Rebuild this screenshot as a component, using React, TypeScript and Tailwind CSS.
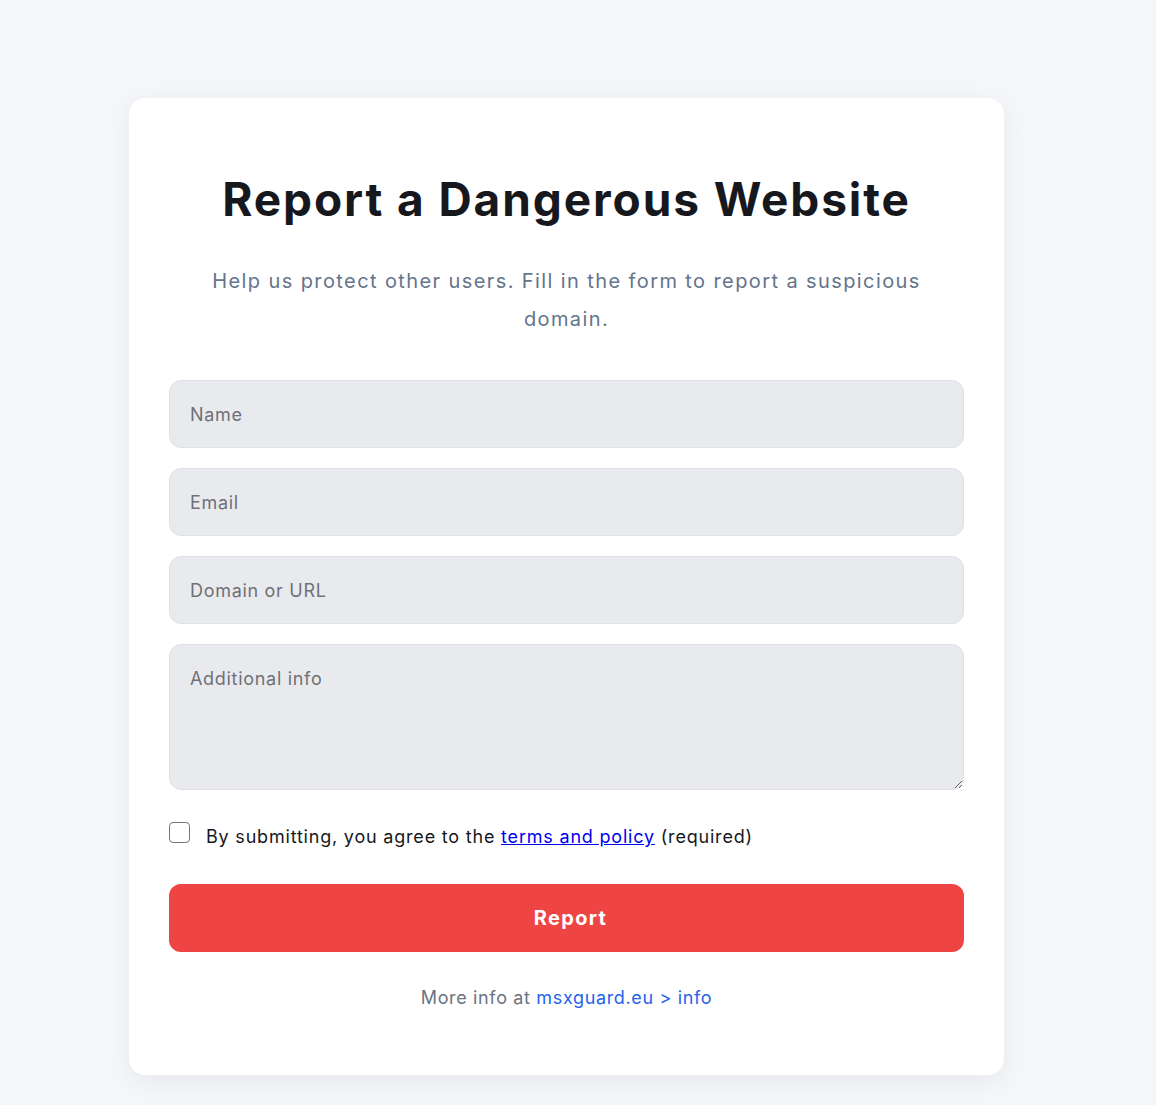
import { useState } from 'react';

export default function App() {
  const [agreed, setAgreed] = useState(false);

  return (
    <div className="min-h-screen w-full bg-[#f5f6fa] flex items-start justify-center pt-[98px] pb-10 pr-[23px]" style={{ fontFamily: 'Inter, "Noto Sans", sans-serif' }}>
      <div className="w-[875px] bg-white rounded-2xl shadow-[0_6px_24px_rgba(15,23,42,0.06)] px-10 pt-[72px] pb-[63px]">
        {/* Header */}
        <h1 className="text-center text-[46px] leading-[58px] font-bold tracking-[1.9px] text-[#16181d]">
          Report a Dangerous Website
        </h1>
        <p className="mx-auto mt-[34px] max-w-[730px] text-center text-[20px] leading-[38px] tracking-[1.4px] text-[#64748b]">
          Help us protect other users. Fill in the form to report a suspicious domain.
        </p>

        {/* Form */}
        <form className="mt-[42px] flex flex-col" onSubmit={(e) => e.preventDefault()}>
          <div className="flex flex-col gap-5">
            <input
              type="text"
              placeholder="Name"
              className="h-[68px] w-full rounded-xl border border-[#dfe1e6] bg-[#e9eaee] px-5 text-[18px] tracking-[0.7px] text-[#16181d] placeholder:text-[#6f7177] outline-none"
            />
            <input
              type="email"
              placeholder="Email"
              className="h-[68px] w-full rounded-xl border border-[#dfe1e6] bg-[#e9eaee] px-5 text-[18px] tracking-[0.7px] text-[#16181d] placeholder:text-[#6f7177] outline-none"
            />
            <input
              type="text"
              placeholder="Domain or URL"
              className="h-[68px] w-full rounded-xl border border-[#dfe1e6] bg-[#e9eaee] px-5 text-[18px] tracking-[0.7px] text-[#16181d] placeholder:text-[#6f7177] outline-none"
            />
            <textarea
              placeholder="Additional info"
              className="block h-[146px] w-full rounded-xl border border-[#dfe1e6] bg-[#e9eaee] px-5 pt-[20px] text-[18px] leading-[28px] tracking-[0.7px] text-[#16181d] placeholder:text-[#6f7177] outline-none"
            />
          </div>

          <label className="mt-8 flex items-start gap-[16px] text-[18px] leading-[30px] tracking-[0.8px] text-[#16181d]">
            <input
              type="checkbox"
              checked={agreed}
              onChange={(e) => setAgreed(e.target.checked)}
              className="mt-0 h-[21px] w-[21px] shrink-0 appearance-none rounded-[4px] border border-[#767676] bg-white"
            />
            <span>
              By submitting, you agree to the{' '}
              <a href="#" className="text-[#0000ee] underline">terms and policy</a> (required)
            </span>
          </label>

          <button
            type="submit"
            className="mt-8 h-[68px] w-full rounded-xl bg-[#ef4444] text-[20px] font-bold tracking-[1.3px] text-white"
          >
            <span className="pl-[8px]">Report</span>
          </button>

          <p className="mt-8 text-center text-[18px] leading-[28px] tracking-[0.65px] text-[#6b7280]">
            More info at <a href="#" className="text-[#2563eb]">msxguard.eu &gt; info</a>
          </p>
        </form>
      </div>
    </div>
  );
}
